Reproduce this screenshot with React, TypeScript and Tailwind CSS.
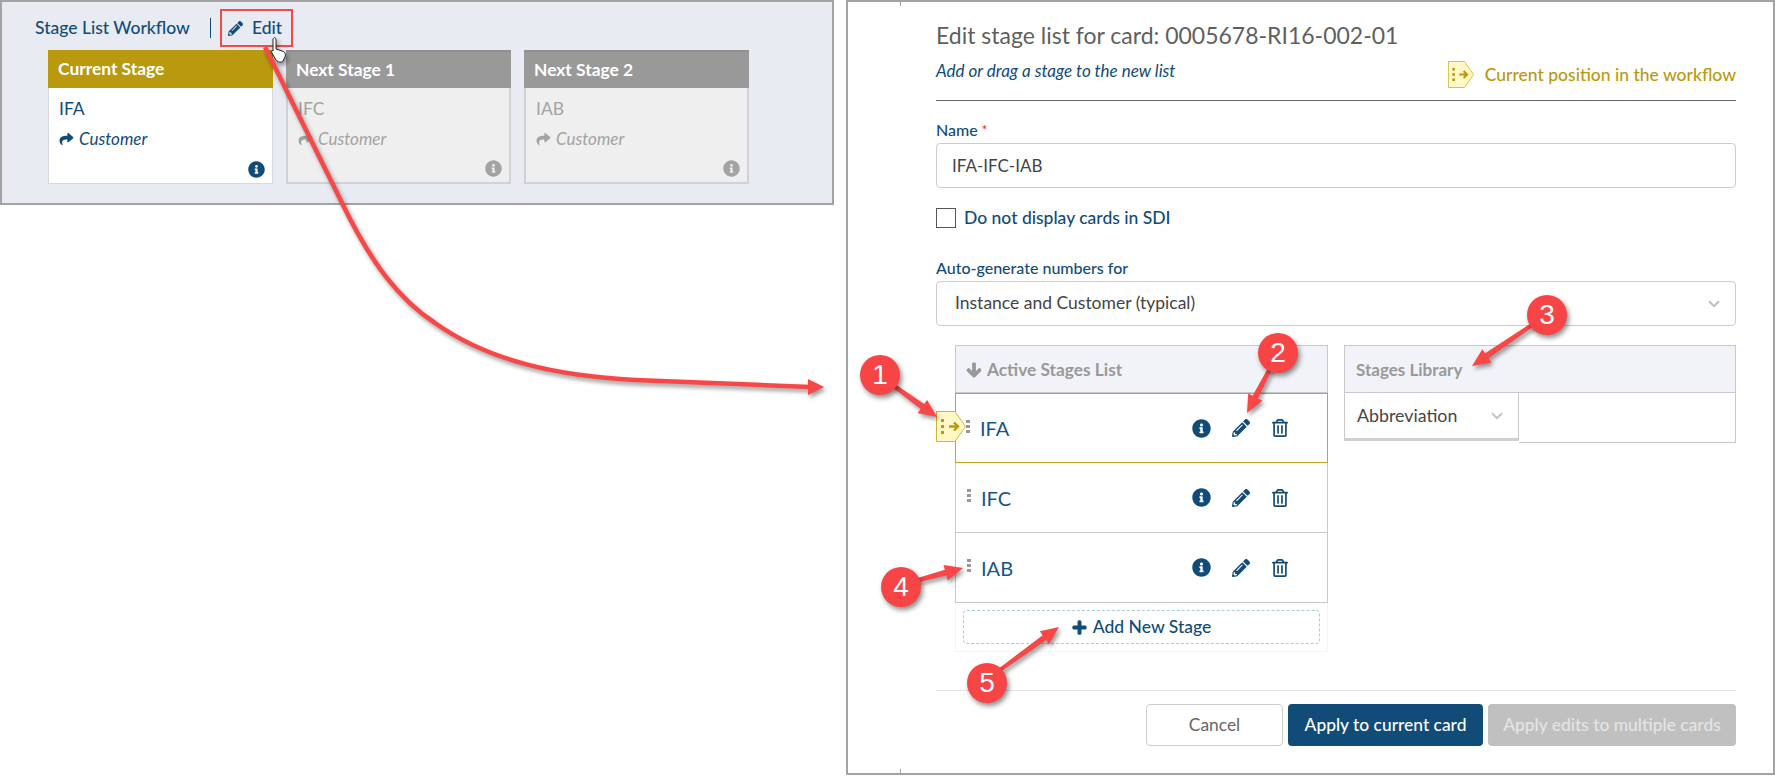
import { ChevronDown } from "lucide-react";
import {
  FaArrowDown,
  FaInfoCircle,
  FaPencilAlt,
  FaPlus,
  FaRegTrashAlt,
  FaShare,
} from "react-icons/fa";

function PositionTag({ className }: { className: string }) {
  return (
    <svg viewBox="0 0 30 31" className={className}>
      <path d="M0.5 0.5H19L29.5 15.5L19 30.5H0.5Z" fill="#fdf8c6" stroke="#d3b53a" />
      <rect x="5" y="8" width="3" height="3" fill="#b9990e" />
      <rect x="5" y="14" width="3" height="3" fill="#b9990e" />
      <rect x="5" y="20" width="3" height="3" fill="#b9990e" />
      <path d="M13 15.5H21M18 11.5L22 15.5L18 19.5" fill="none" stroke="#b9990e" strokeWidth="2.4" />
    </svg>
  );
}

function Grip() {
  return (
    <div className="flex flex-col gap-[2px] -mt-1">
      <div className="h-[3px] w-1 bg-[#999]" />
      <div className="h-[3px] w-1 bg-[#999]" />
      <div className="h-[3px] w-1 bg-[#999]" />
    </div>
  );
}

function StageCard({
  title,
  code,
  active,
}: {
  title: string;
  code: string;
  active?: boolean;
}) {
  return (
    <div className="w-[225px]">
      <div
        className={
          active
            ? "flex h-[38px] items-center bg-[#b9990e] pl-[10px] text-[17.4px] font-bold text-white"
            : "flex h-[38px] items-center border-t-2 border-[#8f8f8f] bg-[#999] pl-[10px] text-[17.4px] font-bold text-white"
        }
      >
        {title}
      </div>
      <div
        className={
          active
            ? "relative h-[96px] border border-t-0 border-[#d5d9df] bg-white pl-[10px] text-[#114b78]"
            : "relative h-[96px] border-2 border-t-0 border-[#d0d2d5] bg-[#efefef] pl-[10px] text-[#a3a3a3]"
        }
      >
        <div className="pt-[9px] text-[17.5px] leading-[24px]">{code}</div>
        <div className="mt-2 flex items-center gap-[5px] text-[17px] italic leading-[20px]">
          <FaShare className="h-[14px] w-[15px]" />
          Customer
        </div>
        <FaInfoCircle className="absolute bottom-[5px] right-[7px] h-[17px] w-[17px]" />
      </div>
    </div>
  );
}

function StageRow({ code, current }: { code: string; current?: boolean }) {
  return (
    <div
      className={
        current
          ? "relative flex h-[70px] items-center border border-[#c7a422] pl-[10px] pr-[38px]"
          : "relative flex h-[70px] items-center border border-t-0 border-[#c9c9c9] pl-[11px] pr-[38px]"
      }
    >
      {current && <PositionTag className="absolute -left-5 top-[17px] h-[31px] w-[30px]" />}
      <Grip />
      <span className="ml-[10px] text-[20px] text-[#14568a]">{code}</span>
      <div className="ml-auto flex items-center gap-[21px] text-[#114b78]">
        <FaInfoCircle className="h-[19px] w-[19px]" />
        <FaPencilAlt className="h-[18px] w-[18px]" />
        <FaRegTrashAlt className="h-[18px] w-[18px]" />
      </div>
    </div>
  );
}

function Arrow({ x1, y1, x2, y2 }: { x1: number; y1: number; x2: number; y2: number }) {
  const len = Math.hypot(x2 - x1, y2 - y1);
  const ux = (x2 - x1) / len;
  const uy = (y2 - y1) / len;
  const bx = x2 - ux * 18;
  const by = y2 - uy * 18;
  const pts = [
    [x1 - uy * 2, y1 + ux * 2],
    [bx - uy * 3, by + ux * 3],
    [bx - uy * 8, by + ux * 8],
    [x2, y2],
    [bx + uy * 8, by - ux * 8],
    [bx + uy * 3, by - ux * 3],
    [x1 + uy * 2, y1 - ux * 2],
  ];
  return <polygon points={pts.map((p) => p.join(",")).join(" ")} fill="#f74747" />;
}

function Badge({ className, n }: { className: string; n: string }) {
  return (
    <div
      className={
        "absolute flex h-10 w-10 items-center justify-center rounded-full bg-[#f74545] font-['Liberation_Sans',sans-serif] text-[28px] text-white shadow-[2px_3px_5px_rgba(0,0,0,0.45)] " +
        className
      }
    >
      {n}
    </div>
  );
}

export default function App() {
  return (
    <div className="relative flex h-[776px] w-[1775px] items-start gap-3 overflow-hidden bg-white font-['Lato',sans-serif]">
      {/* workflow strip */}
      <section className="h-[205px] w-[834px] shrink-0 border-2 border-[#a3a3a3] bg-[#e8ebf1]">
        <div className="mt-[7px] flex h-[38px] items-center pl-[33px] text-[17.5px] font-medium text-[#114b78]">
          <span className="w-[157px] whitespace-nowrap">Stage List Workflow</span>
          <div className="ml-[18px] h-5 w-px bg-[#114b78]" />
          <div className="ml-[9px] flex h-[38px] w-[73px] items-center gap-[9px] border-2 border-[#f04a4a] pl-[6px]">
            <FaPencilAlt className="h-[15px] w-[15px]" />
            Edit
          </div>
        </div>
        <div className="mt-[3px] flex gap-[13px] pl-[46px]">
          <StageCard title="Current Stage" code="IFA" active />
          <StageCard title="Next Stage 1" code="IFC" />
          <StageCard title="Next Stage 2" code="IAB" />
        </div>
      </section>

      {/* edit form */}
      <section className="relative h-[775px] flex-1 border-2 border-[#a3a3a3] pl-[88px] pr-[37px]">
        <div className="mt-[18px] h-[30px] text-[23px] leading-[30px] text-[#5f5f5f]">
          Edit stage list for card: 0005678-RI16-002-01
        </div>
        <div className="mt-[10px] flex h-[27px] items-start justify-between">
          <span className="text-[17px] italic leading-[22px] text-[#114b78]">
            Add or drag a stage to the new list
          </span>
          <div className="flex items-center gap-[11px] text-[17.5px] font-medium leading-[29px] text-[#b9990e]">
            <PositionTag className="h-[27px] w-[26px]" />
            Current position in the workflow
          </div>
        </div>
        <div className="mt-[13px] h-px bg-[#666]" />
        <div className="mt-[19px] text-[16px] font-medium leading-5 text-[#114b78]">
          Name <span className="align-top text-[13px] text-[#e02b2b]">*</span>
        </div>
        <div className="mt-[3px] flex h-[45px] items-center rounded border border-[#ccc] pl-[15px] text-[17px] text-[#444]">
          IFA-IFC-IAB
        </div>
        <div className="mt-5 flex h-5 items-center gap-2 text-[17.5px] font-medium text-[#114b78]">
          <div className="h-5 w-5 border border-[#555]" />
          Do not display cards in SDI
        </div>
        <div className="mt-[30px] text-[16px] font-medium leading-5 text-[#114b78]">
          Auto-generate numbers for
        </div>
        <div className="mt-[3px] flex h-[45px] items-center justify-between rounded border border-[#ccc] pl-[18px] pr-[12px] text-[17.5px] text-[#444]">
          Instance and Customer (typical)
          <ChevronDown className="h-[18px] w-[18px] text-[#bdbdbd]" strokeWidth={2.5} />
        </div>

        <div className="mt-[19px] flex gap-4 pl-[19px]">
          <div className="w-[373px]">
            <div className="flex h-12 items-center gap-[5px] border border-[#c9c9c9] bg-[#f1f3f8] pl-[10px] pt-[2px] text-[17.3px] font-bold text-[#999]">
              <FaArrowDown className="h-4 w-4" stroke="currentColor" strokeWidth={40} />
              Active Stages List
            </div>
            <StageRow code="IFA" current />
            <StageRow code="IFC" />
            <StageRow code="IAB" />
            <div className="border border-t-0 border-[#f5f5f5] px-[7px] pb-[7px] pt-[7px]">
              <div className="flex h-[34px] items-center justify-center gap-[6px] rounded border border-dashed border-[#a9cdd8] text-[17.5px] font-medium text-[#114b78]">
                <FaPlus className="h-[15px] w-[15px]" stroke="currentColor" strokeWidth={40} />
                <span>Add New Stage</span>
              </div>
            </div>
          </div>
          <div className="w-[392px]">
            <div className="flex h-12 items-center border border-[#c9c9c9] bg-[#f1f3f8] pl-[11px] pt-[2px] text-[17px] font-bold text-[#999]">
              Stages Library
            </div>
            <div className="flex items-start">
              <div className="flex h-[48px] w-[175px] items-center justify-between border-x border-b-[3px] border-[#c9c9c9] border-b-[#d0d0d0] pl-[12px] pr-[12px] text-[17.8px] text-[#444]">
                Abbreviation
                <ChevronDown className="h-[18px] w-[18px] text-[#c4c4c4]" strokeWidth={2.5} />
              </div>
              <div className="h-[50px] flex-1 border-b border-r border-[#c9c9c9]" />
            </div>
          </div>
        </div>

        <div className="mt-[38px] h-px bg-[#e2e2e2]" />
        <div className="mt-[13px] flex justify-end gap-[5px] text-[17.4px]">
          <div className="flex h-[42px] w-[137px] items-center justify-center rounded border border-[#ccc] text-[#666]">
            Cancel
          </div>
          <div className="flex h-[42px] w-[195px] items-center justify-center rounded bg-[#114b78] font-medium text-white">
            Apply to current card
          </div>
          <div className="flex h-[42px] w-[248px] items-center justify-center rounded bg-[#c0c0c0] font-medium text-[#e4e4e4]">
            Apply edits to multiple cards
          </div>
        </div>
        <div className="absolute left-[52px] top-0 h-1 w-px bg-[#a3a3a3]" />
        <div className="absolute bottom-0 left-[52px] h-1 w-px bg-[#a3a3a3]" />
      </section>

      {/* callouts drawn over the page */}
      <svg
        viewBox="0 0 1775 776"
        className="pointer-events-none absolute left-0 top-0 h-[776px] w-[1775px] drop-shadow-[2px_3px_2px_rgba(0,0,0,0.4)]"
      >
        <path
          d="M273 39C274 37 276 37 276 40L276 49L282 51C285 52 286 54 285 57L283 61C281 63 278 62 276 60L272 53C271 51 272 50 273 51Z"
          fill="#fff"
          stroke="#222"
        />
        <path
          d="M265 47L342 203C372 265 400 300 435 323C490 362 560 376 635 380L810 387"
          fill="none"
          stroke="#f74747"
          strokeWidth="4.5"
        />
        <polygon points="808,379 824,387 808,395" fill="#f74747" />
        <Arrow x1={890} y1={383} x2={937} y2={417} />
        <Arrow x1={1272} y1={365} x2={1247} y2={413} />
        <Arrow x1={1535} y1={323} x2={1472} y2={366} />
        <Arrow x1={915} y1={581} x2={963} y2={568} />
        <Arrow x1={1000} y1={670} x2={1059} y2={627} />
      </svg>
      <Badge className="left-[860px] top-[355px]" n="1" />
      <Badge className="left-[1258px] top-[333px]" n="2" />
      <Badge className="left-[1527px] top-[295px]" n="3" />
      <Badge className="left-[881px] top-[567px]" n="4" />
      <Badge className="left-[967px] top-[663px]" n="5" />
    </div>
  );
}
